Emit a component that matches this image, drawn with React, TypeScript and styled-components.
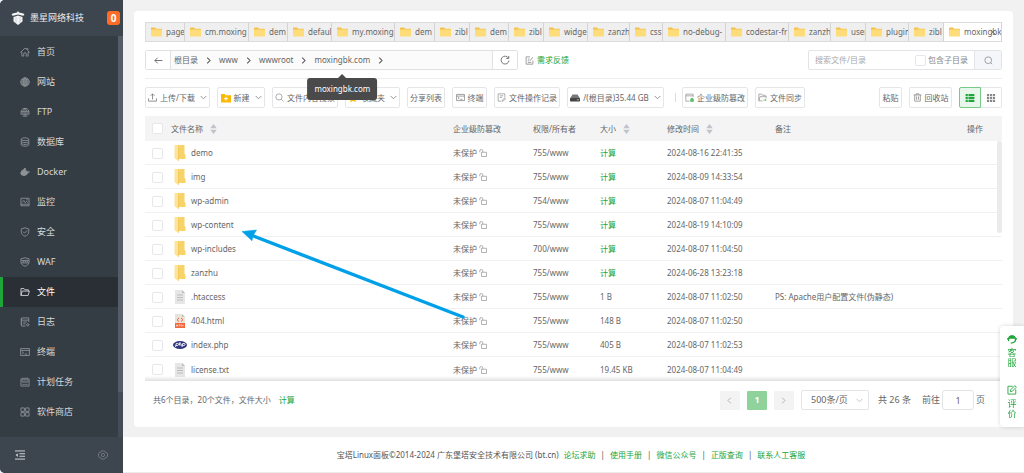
import React from "react";
import styled, { createGlobalStyle, css } from "styled-components";

const GREEN = "#20a53a";

const GlobalStyle = createGlobalStyle`
  * { box-sizing: border-box; }
  body {
    margin: 0;
    background: #f1f1f1;
    color: #666;
    font: 8px/12px "Noto Sans", "Noto Sans CJK SC", sans-serif;
  }
  button, input, select { font: inherit; color: inherit; margin: 0; }
  button { cursor: pointer; }
  a { color: inherit; text-decoration: none; }
  svg { display: block; flex: none; }
`;

/* ---------- icons ---------- */

type IconProps = { size?: number; color?: string; children: React.ReactNode; weight?: number };
const Icon = ({ size = 10, color = "currentColor", weight = 1.4, children }: IconProps) => (
  <svg width={size} height={size} viewBox="0 0 16 16" fill="none" stroke={color} strokeWidth={weight} aria-hidden="true">
    {children}
  </svg>
);

const menuIcons: Record<string, React.ReactNode> = {
  home: <path d="M1 8.5 8 1.5l2.6 2.6V2.4h2v3.7L15 8.5h-2V14.5H10V11a2 2 0 0 0-4 0v3.5H3V8.5z" />,
  site: (
    <>
      <circle cx="8" cy="8" r="6.8" fill="currentColor" fillOpacity=".35" />
      <ellipse cx="8" cy="8" rx="3" ry="6.8" />
      <path d="M8 1v14M1 8h14M2 4.6h12M2 11.4h12" />
    </>
  ),
  ftp: (
    <>
      <path d="M2 11a6.5 6.5 0 1 1 12 0M8 2v13M1.6 7.5h12.8M1 11.5h14M5 11c-.8-4 .2-7 3-9 2.800 2 3.800 5 3 9M4 14.500h8" />
    </>
  ),
  db: (
    <>
      <ellipse cx="8" cy="3.600" rx="6" ry="2.300" />
      <path d="M2 3.600v8.800c0 1.300 2.700 2.300 6 2.300s6-1 6-2.300V3.600M2 6.600c0 1.300 2.700 2.300 6 2.300s6-1 6-2.300M2 9.600c0 1.300 2.700 2.300 6 2.300s6-1 6-2.300" />
    </>
  ),
  docker: (
    <path
      stroke="none"
      fill="currentColor"
      d="M.5 8h1.300V5.700h2.400V3.600h2.300V1.500h2.800v4.200h2.200V8c.8-.2 1-1.200.7-2.600 1 .5 1.500 1.200 1.600 2 .800-.2 1.500-.1 2.200.3-.5 1-1.400 1.500-2.600 1.500C12 12.500 9.500 14.200 6 14.200 2.500 14.200.5 12 .5 8z"
    />
  ),
  monitor: (
    <>
      <path d="M1.500 2h13v12h-13zM1.500 11.500h13" />
      <path d="m3.500 8.500 2.500-3 2.500 3.500 2-2 2 1.500M10 4.500h2.500" />
    </>
  ),
  safe: (
    <>
      <path d="M8 1.300 14 3v5c0 3.300-2.500 5.500-6 6.800C4.500 13.500 2 11.300 2 8V3z" />
      <path d="m5 7.500 2.300 2.300L11.500 5.500" />
    </>
  ),
  waf: (
    <>
      <path d="M8 1.300 14.500 2.800v5.200c0 3.300-2.800 5.500-6.500 6.800-3.700-1.300-6.500-3.500-6.500-6.800V2.800z" />
      <path d="M2 5.500h12M2 9.500h12M4.500 6.500l1 2 1-2M8 8.500l1-2 1 2M12 6.500v2" />
    </>
  ),
  file: <path d="M1.500 13.500v-11h5l1.500 2h5.500v2M1.500 13.500l2-7h11.500l-2 7z" />,
  log: (
    <>
      <path d="M14 8V1.500H2.500v13H9M2.500 5h11.500M5 8h6M5 11h4M.500 4.500h2M.500 8h2M.500 11.500h2" />
      <circle cx="12.500" cy="12.500" r="1.800" />
    </>
  ),
  term: (
    <>
      <path d="M1 2.500h14v11H1zM1 5.500h14" />
      <path d="m3.500 7.500 2.200 1.700-2.200 1.700M7.500 11.300h4" />
    </>
  ),
  cron: <path d="M1.500 3h13v11.500h-13zM1.500 6.500h13M4.500 1v3.500M8 1v3.500M11.500 1v3.500M4 9h2M7 9h2M10 9h2M4 12h2M7 12h2M10 12h2" />,
  shop: (
    <>
      <path d="M1.500 1.500h5.500v5.500H1.500zM1.500 9h5.500v5.500H1.500zM9 9h5.500v5.500H9z" />
      <path d="M9 1.500h5.500v5.500H9z" />
    </>
  ),
};

const Chevron = ({ dir = "down", size = 7, color = "#888", weight = 2 }: { dir?: "down" | "left" | "right"; size?: number; color?: string; weight?: number }) => (
  <Icon size={size} color={color} weight={weight}>
    <path d={{ down: "M1.500 4.500 8 11l6.500-6.500", left: "M11 1.500 4.500 8l6.500 6.500", right: "M5 1.500 11.500 8 5 14.500" }[dir]} />
  </Icon>
);

const TabFolder = () => (
  <svg width="11" height="10" viewBox="0 0 22 20" aria-hidden="true">
    <path d="M0 2.500C0 1.700.7 1 1.500 1H8l2 2.500h10.500c.8 0 1.500.7 1.500 1.500V7H0z" fill="#f3c04b" />
    <rect y="5" width="22" height="14" rx="1.500" fill="#ffdc7a" />
  </svg>
);

const RowFolder = () => (
  <svg width="16" height="16" viewBox="0 0 32 32" aria-hidden="true">
    <path d="M10 0h15v18l2 2v8H10z" fill="#f8d367" />
    <path d="M5 0h6l2 5v27L7 28 5 26z" fill="#fde49a" />
    <path d="M12 4.500l1.500 1.500v26L12 31z" fill="#efc558" />
  </svg>
);

const TextFile = () => (
  <svg width="16" height="16" viewBox="0 0 32 32" aria-hidden="true">
    <path d="M6 2h14l6 6v22H6z" fill="#e6e6e6" />
    <path d="M20 2l6 6h-6z" fill="#bdbdbd" />
    <path d="M10 12h12M10 17h12M10 22h12" stroke="#bcbcbc" strokeWidth="2" />
  </svg>
);

const HtmlFile = () => (
  <svg width="16" height="16" viewBox="0 0 32 32" aria-hidden="true">
    <path d="M6 2h14l6 6v13H6z" fill="#e8e4dc" />
    <path d="M20 2l6 6h-6z" fill="#c8c4b8" />
    <path d="M14 10l-4 3.500 4 3.500M18 10l4 3.500-4 3.500" fill="none" stroke="#f2683c" strokeWidth="2" />
    <rect x="6" y="20" width="20" height="10" fill="#f2683c" />
    <path d="M9 23v4M12 23v4M9 25h3M14 23.500h3M15.500 23.500v3.500M19 27v-3.500l1.500 1.500 1.500-1.500V27" fill="none" stroke="#fff" />
  </svg>
);

const PhpFile = () => (
  <svg width="16" height="16" viewBox="0 0 32 32" aria-hidden="true">
    <ellipse cx="16" cy="16" rx="14" ry="8" fill="#31377f" />
    <path d="M7 20l1.500-7h3q2 0 1.500 2t-2.500 2H8M14.500 17l1.500-7M15 14.500q4-2.500 3.500.5l-.5 3M20 20l1.500-7h3q2 0 1.500 2t-2.500 2H21" fill="none" stroke="#fff" strokeWidth="1.800" />
  </svg>
);

const fileIcons = { folder: <RowFolder />, text: <TextFile />, html: <HtmlFile />, php: <PhpFile /> };

const SortArrows = () => (
  <svg width="7" height="10" viewBox="0 0 14 20" fill="#bfc3ca" aria-hidden="true">
    <path d="M7 0l6.500 8.500H.5zM7 20l6.500-8.500H.5z" />
  </svg>
);

const Lock = () => (
  <svg width="8" height="8" viewBox="0 0 16 16" fill="none" stroke="#999" strokeWidth="1.500" aria-hidden="true">
    <path d="M5 6.500h10v8.500H5zM7.500 6.500V4A2.800 2.800 0 0 0 1.500 4v2.500" />
  </svg>
);

/* ---------- shell ---------- */

const Shell = styled.div`
  display: flex;
  min-height: 100vh;
`;

const Sidebar = styled.aside`
  flex: 0 0 123px;
  display: flex;
  flex-direction: column;
  background: #353d44;
  color: #d6d8da;
  font-size: 9px;
  border-radius: 5px 0 0 5px;
  overflow: hidden;
`;

const Brand = styled.div`
  height: 36px;
  padding: 0 3px 0 11px;
  display: flex;
  align-items: center;
  gap: 5px;
  background: #3d454f;
  color: #e8eaec;
`;

const BrandName = styled.span`
  flex: 1;
  white-space: nowrap;
`;

const Badge = styled.span`
  width: 13px;
  height: 14px;
  border-radius: 3px;
  background: #ff6c26;
  color: #fff;
  font-size: 10px;
  font-weight: 700;
  line-height: 14px;
  text-align: center;
`;

const MenuArea = styled.nav`
  flex: 1;
  padding: 1px 5px 0 0;
  background: linear-gradient(#565d67, #565d67) right 0 top 0 / 5px 356px no-repeat,
    linear-gradient(#454c56, #454c56) right / 5px 100% no-repeat;
`;

const MenuItem = styled.a<{ $active?: boolean }>`
  display: flex;
  align-items: center;
  gap: 7px;
  height: 30px;
  padding-left: 17px;
  border-left: 3px solid transparent;
  svg { color: #8d9296; }
  ${(p) =>
    p.$active &&
    css`
      background: #2a2e35;
      border-color: ${GREEN};
      color: #fff;
      svg { color: #d5d7d9; }
    `}
`;

const SideFoot = styled.div`
  height: 36px;
  padding: 0 15px;
  display: flex;
  align-items: center;
  justify-content: space-between;
  background: #3d454f;
`;

const PlainButton = styled.button`
  padding: 0;
  border: 0;
  background: none;
`;

const Main = styled.main`
  flex: 1;
  min-width: 0;
  display: flex;
  flex-direction: column;
`;

const Content = styled.div`
  flex: 1;
  padding: 11px 11px 10px;
`;

const Card = styled.section`
  padding: 11px 11px 0;
  border-radius: 4px;
  background: #fff;
`;

/* ---------- tabs and path ---------- */

const Tabs = styled.div<{ $columns: string }>`
  display: grid;
  grid-template-columns: ${(p) => p.$columns};
  height: 20px;
  border: 1px solid #dcdcdc;
  border-right-width: 0;
`;

const Tab = styled.button<{ $active?: boolean }>`
  position: relative;
  padding: 0 0 0 5px;
  display: flex;
  align-items: center;
  gap: 4px;
  overflow: hidden;
  white-space: nowrap;
  border: 0;
  border-right: 1px solid #d4d4d4;
  background: ${(p) => (p.$active ? "#fff" : "#efefef")};
`;

const TabClose = styled.span`
  position: absolute;
  right: 5px;
`;

const PathRow = styled.div`
  display: flex;
  align-items: center;
  margin-top: 8px;
  padding-bottom: 8px;
  border-bottom: 1px solid #eee;
`;

const PathBar = styled.div`
  display: flex;
  flex: 0 1 373px;
  height: 20px;
  border: 1px solid #e0e0e0;
  border-radius: 2px;
`;

const PathButton = styled.button`
  width: 24px;
  display: grid;
  place-items: center;
  padding: 0;
  border: 0;
  background: #fff;
  color: #666;
`;

const Crumbs = styled.div`
  flex: 1;
  display: flex;
  align-items: center;
  gap: 7px;
  padding-left: 3px;
  background: #fbfbfb;
  border: solid #e0e0e0;
  border-width: 0 1px;
`;

const Crumb = styled.a`
  position: relative;
`;

const Tooltip = styled.span`
  position: absolute;
  z-index: 2;
  top: 24px;
  left: 50%;
  transform: translateX(-50%);
  padding: 5px 7px;
  border-radius: 3px;
  background: #4a4a4a;
  color: #fff;
  &::before {
    content: "";
    position: absolute;
    top: -4px;
    left: 50%;
    margin-left: -4px;
    border: solid transparent;
    border-width: 0 4px 4px;
    border-bottom-color: #4a4a4a;
  }
`;

const Feedback = styled.a`
  display: flex;
  align-items: center;
  gap: 3px;
  margin-left: 7px;
  color: ${GREEN};
`;

const Search = styled.form`
  display: flex;
  align-items: center;
  width: 194px;
  height: 20px;
  margin-left: auto;
  border: 1px solid #e2e4e8;
  border-radius: 2px;
`;

const SearchInput = styled.input`
  flex: 1;
  min-width: 0;
  padding: 0 6px;
  border: 0;
  outline: 0;
  background: none;
  &::placeholder { color: #aaa; opacity: 1; }
`;

const CheckLabel = styled.label`
  display: flex;
  align-items: center;
  gap: 2px;
  margin-right: 6px;
  color: #888;
`;

const Check = styled.input.attrs({ type: "checkbox" })`
  appearance: none;
  display: block;
  width: 11px;
  height: 11px;
  border: 1px solid #e6e7ea;
  border-radius: 2px;
  background: #fff;
`;

const SearchButton = styled.button`
  align-self: stretch;
  width: 27px;
  padding: 0;
  display: grid;
  place-items: center;
  border: 0;
  border-left: 1px solid #e2e4e8;
  background: #f4f6fa;
  color: #999;
`;

/* ---------- toolbar ---------- */

const Toolbar = styled.div`
  display: flex;
  gap: 7px;
  margin: 8px 0;
`;

const ToolButton = styled.button<{ $w: number }>`
  min-width: ${(p) => p.$w}px;
  height: 21px;
  padding: 0 2px;
  display: flex;
  align-items: center;
  justify-content: center;
  gap: 3px;
  border: 1px solid #e4e6ea;
  border-radius: 2px;
  background: #fff;
  white-space: nowrap;
  svg + span + svg { margin-left: 2px; }
`;

const ExtraTools = styled.div`
  display: flex;
  align-items: center;
  gap: 7px;
  margin: 0 auto 0 4px;
  &::before {
    content: "";
    width: 1px;
    height: 9px;
    margin-right: -1px;
    background: #ddd;
  }
`;

const ViewSwitch = styled.div`
  display: flex;
`;

const ViewButton = styled.button<{ $active?: boolean }>`
  width: ${(p) => (p.$active ? 22 : 21)}px;
  height: 21px;
  padding: 0;
  display: grid;
  place-items: center;
  border: 1px solid ${(p) => (p.$active ? "#79c989" : "#e4e6ea")};
  border-left-width: ${(p) => (p.$active ? 1 : 0)}px;
  border-radius: ${(p) => (p.$active ? "2px 0 0 2px" : "0 2px 2px 0")};
  background: ${(p) => (p.$active ? "#e9f6eb" : "#fff")};
  color: ${(p) => (p.$active ? GREEN : "#888")};
`;

/* ---------- file table ---------- */

const TableArea = styled.div`
  position: relative;
  &::after {
    content: "";
    position: absolute;
    inset: auto 0 0;
    height: 5px;
    background: linear-gradient(rgba(0, 0, 0, 0), rgba(0, 0, 0, 0.12));
  }
`;

const ScrollThumb = styled.div`
  position: absolute;
  top: 25px;
  right: 0;
  width: 5px;
  height: 92px;
  border-radius: 3px;
  background: #ebebeb;
`;

const Pointer = styled.svg`
  position: absolute;
  z-index: 1;
  left: 97px;
  top: 112px;
  pointer-events: none;
`;

const FileTable = styled.table`
  width: 100%;
  table-layout: fixed;
  border-collapse: separate;
  border-spacing: 0;
  th, td { padding: 0; text-align: left; font-weight: 400; white-space: nowrap; }
  th { height: 25px; background: #f4f4f4; }
  td { height: 24px; padding-top: 1px; border-bottom: 1px solid #f0f0f0; }
  tbody tr:last-child td { border-bottom: 0; }
  th:first-child, td:first-child { padding-left: 7px; }
`;

const Col = styled.col<{ $w?: number }>`
  width: ${(p) => (p.$w ? `${p.$w}px` : "auto")};
`;

const HeadCell = styled.span`
  display: flex;
  align-items: center;
  gap: 7px;
`;

const NameCell = styled.a`
  display: flex;
  align-items: center;
  gap: 3px;
  padding-left: 1px;
`;

const LockCell = styled.span`
  display: flex;
  align-items: center;
  gap: 2px;
`;

const GreenLink = styled.a`
  color: ${GREEN};
`;

const CardFoot = styled.div`
  display: flex;
  align-items: center;
  height: 46px;
  padding: 0 17px 8px 8px;
`;

const Summary = styled.div`
  display: flex;
  gap: 8px;
  margin-right: auto;
`;

const Pager = styled.div`
  display: flex;
  align-items: center;
  gap: 7px;
  font-size: 9px;
`;

const PageButton = styled.button<{ $active?: boolean }>`
  width: 20px;
  height: 19px;
  padding: 0;
  display: grid;
  place-items: center;
  border: 0;
  border-radius: 1px;
  background: ${(p) => (p.$active ? "#90d29c" : "#f3f3f3")};
  color: #fff;
  font-weight: 700;
`;

const SelectBox = styled.div`
  display: grid;
  align-items: center;
  width: 68px;
  height: 20px;
  border: 1px solid #e2e4e8;
  border-radius: 2px;
  > * { grid-area: 1 / 1; }
  > svg { justify-self: end; margin-right: 5px; pointer-events: none; }
`;

const PageSize = styled.select`
  appearance: none;
  width: 100%;
  height: 100%;
  padding: 0 9px;
  border: 0;
  background: none;
`;

const Total = styled.span`
  margin: 0 4px 0 2px;
`;

const JumpLabel = styled.label`
  display: flex;
  align-items: center;
  gap: 2px;
`;

const JumpInput = styled.input`
  width: 32px;
  height: 20px;
  padding: 0;
  text-align: center;
  border: 1px solid #e2e4e8;
  border-radius: 3px;
`;

const Footer = styled.footer`
  display: flex;
  align-items: center;
  justify-content: center;
  gap: 5px;
  height: 36px;
  padding-right: 5px;
  background: #fff;
  border-bottom: 1px solid #ececec;
  color: #555;
`;

const FloatPanel = styled.aside`
  position: fixed;
  right: 0;
  bottom: 46px;
  width: 24px;
  height: 101px;
  padding: 8px 0;
  display: flex;
  flex-direction: column;
  align-items: center;
  justify-content: space-between;
  border-radius: 4px 0 0 4px;
  background: #fff;
  box-shadow: 0 0 4px rgba(0, 0, 0, 0.16);
`;

const FloatLink = styled.a`
  display: flex;
  flex-direction: column;
  align-items: center;
  gap: 4px;
  width: 10px;
  color: ${GREEN};
  font-size: 9px;
  line-height: 10px;
`;

const FloatText = styled.span`
  width: 9px;
  word-break: break-all;
`;

/* ---------- data ---------- */

const menu: [string, string][] = [
  ["home", "首页"],
  ["site", "网站"],
  ["ftp", "FTP"],
  ["db", "数据库"],
  ["docker", "Docker"],
  ["monitor", "监控"],
  ["safe", "安全"],
  ["waf", "WAF"],
  ["file", "文件"],
  ["log", "日志"],
  ["term", "终端"],
  ["cron", "计划任务"],
  ["shop", "软件商店"],
];

const tabs: [string, number][] = [
  ["page", 39],
  ["cm.moxing", 64],
  ["dem", 39],
  ["defaul", 44],
  ["my.moxing", 63],
  ["dem", 40],
  ["zibl", 35],
  ["dem", 39],
  ["zibl", 35],
  ["widge", 44],
  ["zanzh", 42],
  ["css", 33],
  ["no-debug-", 63],
  ["codestar-fr", 63],
  ["zanzh", 42],
  ["user", 35],
  ["plugin", 43],
  ["zibl", 35],
  ["moxingbk", 58],
];

const tabColumns = tabs.map(([, share]) => `minmax(0, ${share}fr)`).join(" ");

const crumbs = ["根目录", "www", "wwwroot", "moxingbk.com"];

type FileRow = { name: string; icon: keyof typeof fileIcons; mode: string; size?: string; time: string; note?: string };
const files: FileRow[] = [
  { name: "demo", icon: "folder", mode: "755/www", time: "2024-08-16 22:41:35" },
  { name: "img", icon: "folder", mode: "755/www", time: "2024-08-09 14:33:54" },
  { name: "wp-admin", icon: "folder", mode: "754/www", time: "2024-08-07 11:04:49" },
  { name: "wp-content", icon: "folder", mode: "755/www", time: "2024-08-19 14:10:09" },
  { name: "wp-includes", icon: "folder", mode: "700/www", time: "2024-08-07 11:04:50" },
  { name: "zanzhu", icon: "folder", mode: "755/www", time: "2024-06-28 13:23:18" },
  { name: ".htaccess", icon: "text", mode: "755/www", size: "1 B", time: "2024-08-07 11:02:50", note: "PS: Apache用户配置文件(伪静态)" },
  { name: "404.html", icon: "html", mode: "755/www", size: "148 B", time: "2024-08-07 11:02:50" },
  { name: "index.php", icon: "php", mode: "755/www", size: "405 B", time: "2024-08-07 11:02:53" },
  { name: "license.txt", icon: "text", mode: "755/www", size: "19.45 KB", time: "2024-08-07 11:04:49" },
];

const columns: { label: string; w?: number; sort?: boolean }[] = [
  { label: "文件名称", sort: true },
  { label: "企业级防篡改", w: 80 },
  { label: "权限/所有者", w: 67 },
  { label: "大小", w: 67, sort: true },
  { label: "修改时间", w: 108, sort: true },
  { label: "备注", w: 192 },
  { label: "操作", w: 35 },
];

const footerLinks = ["论坛求助", "使用手册", "微信公众号", "正版查询", "联系人工客服"];

/* ---------- page ---------- */

export default function App() {
  return (
    <>
      <GlobalStyle />
      <Shell>
        <Sidebar>
          <Brand>
            <svg width="14" height="14" viewBox="0 0 28 28" fill="#f2f4f5" aria-hidden="true">
              <path d="M14 0l2 3 9 2 2 3-3 1.500L14 7 4 9.500 1 8l2-3 9-2z" />
              <path d="M5 12l9-3 9 3v9l-9 7-9-7z" />
              <path d="M10 12v12M18 12v12" stroke="#a9afb5" />
            </svg>
            <BrandName>墨星网络科技</BrandName>
            <Badge>0</Badge>
          </Brand>
          <MenuArea>
            {menu.map(([icon, label]) => (
              <MenuItem key={icon} href="#" $active={icon === "file"}>
                <Icon>{menuIcons[icon]}</Icon>
                {label}
              </MenuItem>
            ))}
          </MenuArea>
          <SideFoot>
            <PlainButton aria-label="收起菜单">
              <Icon color="#d0d3d6" weight={1.6}>
                <path d="M0 1.500h16M7 6h9M7 10h9M0 14.500h16" />
                <path d="M4.500 5v6L1 8z" fill="#d0d3d6" stroke="none" />
              </Icon>
            </PlainButton>
            <PlainButton aria-label="设置">
              <Icon color="#757c84">
                <path d="M5.500 1.500h5l1 2 2.500.5 1.500 4-1.500 4-2.500.5-1 2h-5l-1-2L2 12 .5 8 2 4l2.500-.5z" />
                <circle cx="8" cy="8" r="2.600" />
              </Icon>
            </PlainButton>
          </SideFoot>
        </Sidebar>

        <Main>
          <Content>
            <Card>
              <Tabs $columns={tabColumns}>
                {tabs.map(([label], i) => {
                  const active = i === tabs.length - 1;
                  return (
                    <Tab key={i} $active={active}>
                      <TabFolder />
                      {label}
                      {active && (
                        <TabClose>
                          <Icon size={6} weight={2} color="#666">
                            <path d="M2 2l12 12M14 2L2 14" />
                          </Icon>
                        </TabClose>
                      )}
                    </Tab>
                  );
                })}
              </Tabs>

              <PathRow>
                <PathBar>
                  <PathButton aria-label="返回">
                    <Icon size={9} weight={1.6}>
                      <path d="M15 8H1.500M6.500 3l-5 5 5 5" />
                    </Icon>
                  </PathButton>
                  <Crumbs>
                    {crumbs.map((c, i) => (
                      <React.Fragment key={c}>
                        <Crumb href="#">
                          {c}
                          {i === 3 && <Tooltip role="tooltip">moxingbk.com</Tooltip>}
                        </Crumb>
                        <Chevron dir="right" color="#555" weight={2.4} />
                      </React.Fragment>
                    ))}
                  </Crumbs>
                  <PathButton aria-label="刷新">
                    <Icon>
                      <path d="M13.500 5A6.300 6.300 0 1 0 14.300 9M14 1.500V5.500H10" />
                    </Icon>
                  </PathButton>
                </PathBar>
                <Feedback href="#">
                  <Icon size={9} color="#888">
                    <path d="M14 8v6.500H2v-13h7M5 5.500h3M5 8.500h2M5 11.500h6M8.500 9l5.500-7" />
                  </Icon>
                  需求反馈
                </Feedback>
                <Search onSubmit={(e) => e.preventDefault()}>
                  <SearchInput aria-label="搜索" placeholder="搜索文件/目录" />
                  <CheckLabel>
                    <Check />
                    包含子目录
                  </CheckLabel>
                  <SearchButton aria-label="搜索文件">
                    <Icon size={9} weight={1.6}>
                      <circle cx="7.500" cy="7.500" r="6" />
                      <path d="m11.500 11.500 3 3" />
                    </Icon>
                  </SearchButton>
                </Search>
              </PathRow>

              <Toolbar>
                <ToolButton $w={65}>
                  <Icon size={9} color="#777">
                    <path d="M1 9.500v5h14v-5M8 11.500V1.500M4.500 5 8 1.500 11.500 5" />
                  </Icon>
                  <span>上传/下载</span>
                  <Chevron />
                </ToolButton>
                <ToolButton $w={48}>
                  <Icon>
                    <path d="M0 1.500h6l1.500 2H16v11.500H0z" fill="#fcb900" stroke="none" />
                    <path d="M8 6v6M5 9h6" stroke="#fff" strokeWidth="1.800" />
                  </Icon>
                  <span>新建</span>
                  <Chevron />
                </ToolButton>
                <ToolButton $w={66}>
                  <Icon size={9} color="#999">
                    <circle cx="7" cy="7" r="5.500" />
                    <path d="m11 11 4 4" />
                  </Icon>
                  <span>文件内容搜索</span>
                </ToolButton>
                <ToolButton $w={54}>
                  <Icon>
                    <path d="m8 1 2.200 4.600 5 .7-3.600 3.500.9 5L8 12.400l-4.500 2.400.9-5L.8 6.300l5-.7z" fill="#fcb900" stroke="none" />
                  </Icon>
                  <span>收藏夹</span>
                  <Chevron />
                </ToolButton>
                <ToolButton $w={38}>分享列表</ToolButton>
                <ToolButton $w={35}>
                  <Icon size={9} color="#888">{menuIcons.term}</Icon>
                  <span>终端</span>
                </ToolButton>
                <ToolButton $w={66}>
                  <Icon size={9} color="#999">
                    <path d="M14 8V1.500H2v13h6M5 5h6M5 8h4M9.500 14.500l.5-2.500 4-3 1 1.500-3.500 3.500z" />
                  </Icon>
                  <span>文件操作记录</span>
                </ToolButton>
                <ToolButton $w={97}>
                  <Icon>
                    <path d="M4 2.500h8l3.500 5.500H.5z" fill="#777" stroke="none" />
                    <rect x="0" y="8" width="16" height="5.500" rx="1" fill="#444" stroke="none" />
                    <path d="M11 10.800h3" stroke="#fff" strokeWidth="1" />
                  </Icon>
                  <span>/(根目录)35.44 GB</span>
                  <Chevron />
                </ToolButton>
                <ExtraTools>
                  <ToolButton $w={66}>
                    <Icon size={9} color="#999">
                      <path d="M14.500 7V2h-13v12.500H8M1.500 5h13" />
                      <path d="M10 11h5v4h-5zM11 11V9.500h3V11" fill="#5cc06e" stroke="#5cc06e" />
                    </Icon>
                    <span>企业级防篡改</span>
                  </ToolButton>
                  <ToolButton $w={50}>
                    <Icon size={9} color="#999">
                      <path d="M8 14H1.500V2H6l1.500 2H13v2.500M1.500 14l2-7.500H15l-.8 3" />
                      <path d="M9.500 12.500h5M12.500 10.500l2 2-2 2" stroke="#5cc06e" />
                    </Icon>
                    <span>文件同步</span>
                  </ToolButton>
                </ExtraTools>
                <ToolButton $w={23}>粘贴</ToolButton>
                <ToolButton $w={43}>
                  <Icon size={9} color="#888">
                    <path d="M1 3.500h14M5.500 3.500v-2h5v2M3 3.500v11h10v-11M6.300 6v6M9.700 6v6" />
                  </Icon>
                  <span>回收站</span>
                </ToolButton>
                <ViewSwitch>
                  <ViewButton $active aria-label="列表视图">
                    <Icon>
                      <path d="M1 1.500h3.500v3.500H1zM1 6.300h3.500v3.500H1zM1 11h3.500v3.500H1zM5.500 1.500H15v3.500H5.500zM5.500 6.300H15v3.500H5.500zM5.500 11H15v3.500H5.500z" fill="currentColor" stroke="none" />
                    </Icon>
                  </ViewButton>
                  <ViewButton aria-label="图标视图">
                    <Icon>
                      <path d="M1.500 1.500H5V5H1.500zM6.300 1.500h3.500V5H6.300zM11 1.500h3.500V5H11zM1.500 6.300H5v3.500H1.500zM6.300 6.300h3.500v3.500H6.300zM11 6.300h3.500v3.500H11zM1.500 11H5v3.500H1.500zM6.300 11h3.500v3.500H6.300zM11 11h3.500v3.500H11z" fill="currentColor" stroke="none" />
                    </Icon>
                  </ViewButton>
                </ViewSwitch>
              </Toolbar>

              <TableArea>
                <FileTable>
                  <colgroup>
                    <Col $w={26} />
                    {columns.map((c) => (
                      <Col key={c.label} $w={c.w} />
                    ))}
                  </colgroup>
                  <thead>
                    <tr>
                      <th>
                        <Check aria-label="全选" />
                      </th>
                      {columns.map((c) => (
                        <th key={c.label}>
                          <HeadCell>
                            {c.label}
                            {c.sort && <SortArrows />}
                          </HeadCell>
                        </th>
                      ))}
                    </tr>
                  </thead>
                  <tbody>
                    {files.map((f) => (
                      <tr key={f.name}>
                        <td>
                          <Check aria-label={f.name} />
                        </td>
                        <td>
                          <NameCell href="#">
                            {fileIcons[f.icon]}
                            {f.name}
                          </NameCell>
                        </td>
                        <td>
                          <LockCell>
                            未保护
                            <Lock />
                          </LockCell>
                        </td>
                        <td>{f.mode}</td>
                        <td>{f.size ?? <GreenLink href="#">计算</GreenLink>}</td>
                        <td>{f.time}</td>
                        <td>{f.note}</td>
                        <td />
                      </tr>
                    ))}
                  </tbody>
                </FileTable>
                <ScrollThumb />
                <Pointer width="224" height="92" viewBox="0 0 224 92" aria-hidden="true">
                  <path d="M10 7.500 221 89" stroke="#00a0e9" strokeWidth="3.400" strokeLinecap="round" />
                  <path d="M0 3.500 14.500 2 11 7.800l-1 5z" fill="#00a0e9" stroke="#00a0e9" strokeWidth=".5" />
                </Pointer>
              </TableArea>

              <CardFoot>
                <Summary>
                  共6个目录，20个文件，文件大小
                  <GreenLink href="#">计算</GreenLink>
                </Summary>
                <Pager>
                  <PageButton aria-label="上一页">
                    <Chevron dir="left" color="#aaa" />
                  </PageButton>
                  <PageButton $active>1</PageButton>
                  <PageButton aria-label="下一页">
                    <Chevron dir="right" color="#aaa" />
                  </PageButton>
                  <SelectBox>
                    <PageSize aria-label="每页条数">
                      <option>500条/页</option>
                    </PageSize>
                    <Chevron color="#bbb" />
                  </SelectBox>
                  <Total>共 26 条</Total>
                  <JumpLabel>
                    前往
                    <JumpInput defaultValue="1" />
                    页
                  </JumpLabel>
                </Pager>
              </CardFoot>
            </Card>
          </Content>

          <Footer>
            <span>宝塔Linux面板©2014-2024 广东堡塔安全技术有限公司 (bt.cn)</span>
            {footerLinks.map((l, i) => (
              <React.Fragment key={l}>
                {i > 0 && <span>|</span>}
                <GreenLink href="#">{l}</GreenLink>
              </React.Fragment>
            ))}
          </Footer>
        </Main>
      </Shell>

      <FloatPanel>
        <FloatLink href="#">
          <Icon weight={2}>
            <path d="M2 9a6 6 0 0 1 12 0M6 14.500c3 0 6-1 7.500-3.500" />
            <path d="M0 6.500h3.500v5H2zM12.500 6.500H16l-2 5h-1.500zM3 7.500a5 5 0 0 1 10 0z" fill="currentColor" stroke="none" />
          </Icon>
          <FloatText>客服</FloatText>
        </FloatLink>
        <FloatLink href="#">
          <Icon>
            <path d="M14 7v7.500H1.500V2H9M5.500 10.500l.5-3L12.500 1 15 3.500 8.500 10z" />
          </Icon>
          <FloatText>评价</FloatText>
        </FloatLink>
      </FloatPanel>
    </>
  );
}
